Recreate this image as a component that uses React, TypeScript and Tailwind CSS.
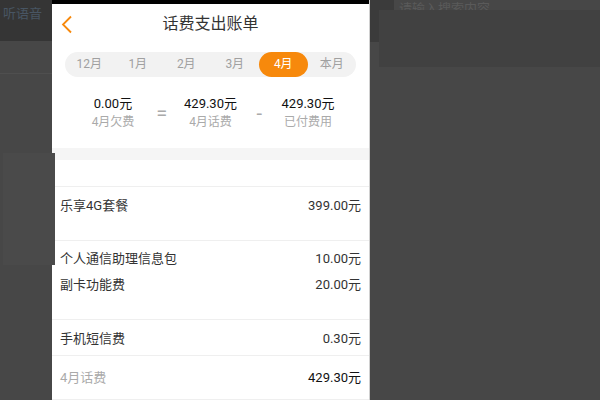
import React from 'react';

const months = ['12月', '1月', '2月', '3月', '4月', '本月'];

const groups: { pt: string; pb: string; items: [string, string][] }[] = [
  { pt: 'pt-[5px]', pb: 'pb-[22px]', items: [['乐享4G套餐', '399.00元']] },
  {
    pt: 'pt-[4px]',
    pb: 'pb-[22px]',
    items: [
      ['个人通信助理信息包', '10.00元'],
      ['副卡功能费', '20.00元'],
    ],
  },
  { pt: 'pt-[5px]', pb: 'pb-[4px]', items: [['手机短信费', '0.30元']] },
];

function Summary({ value, label }: { value: string; label: string }) {
  return (
    <div className="w-[64px] flex flex-col items-center">
      <span className="text-[13px] leading-[18px] text-[#111]">{value}</span>
      <span className="text-[12px] leading-[18px] text-[#aaa]">{label}</span>
    </div>
  );
}

export default function App() {
  return (
    <div
      className="relative w-[600px] h-[400px] overflow-hidden flex bg-[#474747]"
      style={{ fontFamily: 'Roboto, "Noto Sans CJK SC", sans-serif' }}
    >
      {/* dimmed page behind, left */}
      <div className="w-[52px] flex flex-col">
        <div className="h-[41px] bg-[#353535] flex items-center pl-[3px] pb-[14px]">
          <span className="text-[13px] text-[#485563] whitespace-nowrap">听语音</span>
        </div>
        <div className="h-[33px] border-b border-[#4f4f4f]" />
      </div>

      {/* bill panel */}
      <div className="w-[317px] bg-white flex flex-col">
        <div className="h-[4px] bg-black" />
        <div className="relative h-[40px] flex items-center justify-center">
          <svg className="absolute left-[9px] top-[11px]" width="12" height="19" viewBox="0 0 12 19" fill="none">
            <path d="M10 1.5L2 9.5L10 17.5" stroke="#f7890c" strokeWidth="1.8" />
          </svg>
          <span className="text-[16px] text-[#333]">话费支出账单</span>
        </div>
        <div className="mx-[13px] mt-[8px] h-[25px] rounded-full bg-[#f2f2f2] flex">
          {months.map((m) => (
            <div
              key={m}
              className={
                m === '4月'
                  ? 'flex-1 rounded-full bg-[#f7890c] text-white text-[12px] flex items-center justify-center'
                  : 'flex-1 text-[#a0a0a0] text-[12px] flex items-center justify-center'
              }
            >
              {m}
            </div>
          ))}
        </div>
        <div className="mt-[18px] flex justify-center items-center">
          <Summary value="0.00元" label="4月欠费" />
          <span className="w-[33.5px] text-center text-[20px] text-[#aaa] leading-none">=</span>
          <Summary value="429.30元" label="4月话费" />
          <span className="w-[33.5px] text-center text-[20px] text-[#aaa] leading-none">-</span>
          <Summary value="429.30元" label="已付费用" />
        </div>
        <div className="mt-[17px] h-[13px] bg-[#f5f5f5]" />
        <div className="h-[27px] border-b border-[#efefef]" />
        {groups.map((g, i) => (
          <div key={i} className={`${g.pt} ${g.pb} px-[8px] border-b border-[#efefef]`}>
            {g.items.map(([name, price]) => (
              <div key={name} className="h-[26px] flex items-center justify-between text-[13px] text-[#333]">
                <span>{name}</span>
                <span>{price}</span>
              </div>
            ))}
          </div>
        ))}
        <div className="h-[44px] px-[8px] flex items-center justify-between text-[13px] border-b border-[#efefef]">
          <span className="text-[#aaa]">4月话费</span>
          <span className="text-[#111]">429.30元</span>
        </div>
      </div>

      {/* dimmed page behind, right */}
      <div className="w-[1px] bg-[#d0d0d0]" />
      <div className="relative flex-1">
        <div className="flex">
          <div className="w-[24px] h-[42px] bg-[#3b3b3b]" />
          <span className="ml-[5px] text-[13px] text-[#5a5a5a] leading-[17px] whitespace-nowrap">请输入搜索内容</span>
        </div>
        <div className="absolute left-[9px] top-[10px] right-0 h-[57px] bg-[#414141]" />
      </div>

      {/* dimmed card overlapping the panel's edge */}
      <div className="absolute left-[3px] top-[153px] w-[52px] h-[112px] bg-[#4a4a4a]" />
    </div>
  );
}
